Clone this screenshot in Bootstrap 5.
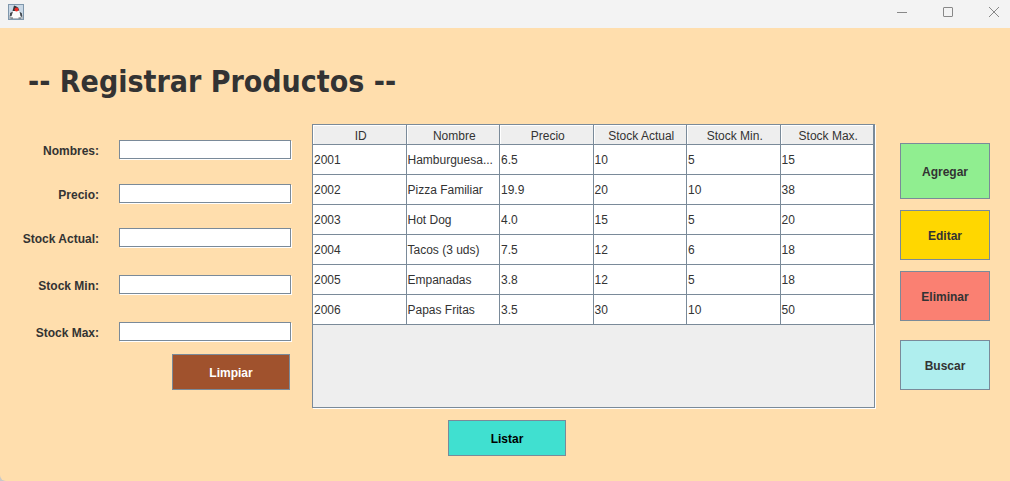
<!DOCTYPE html>
<html lang="es">
<head>
<meta charset="utf-8">
<meta name="viewport" content="width=device-width, initial-scale=1">
<title>Registrar Productos</title>
<link href="https://cdn.jsdelivr.net/npm/bootstrap@5.3.0/dist/css/bootstrap.min.css" rel="stylesheet">
<style>
  :root { --line: #7a8a99; --ink: #333; }
  body { background: #c9c9c9; color: var(--ink); font: 12px/16px "Liberation Sans", Arial, sans-serif; }
  .app-window { background: #ffdead; border-bottom-left-radius: 6px; overflow: hidden; }
  .title-strip { background: #f3f3f3; height: 28px; padding: 0 8px; }
  .win-btns { gap: 30px; }
  .win-btn { border: 0; background: none; padding: 0; width: 16px; height: 24px; color: #888; display: flex; align-items: center; justify-content: center; }
  .heading { font: bold 30px/40px "DejaVu Sans Condensed", "DejaVu Sans", sans-serif; padding: 34px 28px 0; }
  .work-area { padding: 22px 20px 24px 19px; }
  .product-form { width: 272px; margin-top: 16px; }
  .field { display: flex; align-items: center; justify-content: space-between; gap: 20px; margin-bottom: 25px; }
  .field.roomy { margin-bottom: 28px; }
  .field label { flex: 1; text-align: right; font-weight: bold; padding-top: 3px; }
  .field .form-control { width: 172px; height: 19px; min-height: 0; padding: 0 2px; font-size: 12px; border: 1px solid var(--line); border-radius: 0; box-shadow: 1px 1px #fff; }
  .form-actions { margin-top: 13px; padding-right: 1px; }
  .swing { border: 1px solid var(--line); border-radius: 0; font-size: 12px; line-height: 16px; font-weight: bold; color: var(--ink); padding: 2px 0 0; height: 50px; }
  .swing.wide { width: 118px; height: 36px; }
  .swing.tall { height: 56px; }
  .c-limpiar { background: #a0522d; color: #fff; }
  .c-listar { background: #40e0d0; color: #000; }
  .c-agregar { background: #90ee90; }
  .c-editar { background: #ffd700; }
  .c-eliminar { background: #fa8072; }
  .c-buscar { background: #afeeee; }
  .product-list { margin: 0 25px 0 21px; }
  .grid-pane { background: #eee; border: 1px solid var(--line); box-shadow: 1px 1px #fff; min-height: 284px; }
  .grid-table { table-layout: fixed; width: 100%; border-collapse: separate; border-spacing: 0; }
  .grid-table th, .grid-table td { border: solid var(--line); border-width: 0 1px 1px 0; overflow: hidden; white-space: nowrap; text-overflow: ellipsis; }
  .grid-table th { height: 20px; padding: 3px 0 0 3px; font-weight: normal; text-align: center; background: #eee; box-shadow: inset 1px 1px #fff; }
  .grid-table td { height: 30px; padding: 0 1px; background: #fff; }
  .side-actions { width: 90px; margin-top: 19px; gap: 11px; }
  .listar-row { margin-top: 12px; padding-left: 136px; }
</style>
</head>
<body>
<div class="app-window min-vh-100">
  <header class="title-strip d-flex justify-content-between">
    <svg class="mt-1" width="16" height="16" viewBox="0 0 16 16" role="img" aria-label="Java">
      <rect x=".5" y=".5" width="15" height="15" fill="#c9d8e6" stroke="#7f97ac"/>
      <path d="M1 11h14v4H1z" fill="#b4bcc4"/>
      <path d="M5 5 4 9l-1 5h10l-1-5-1-4z" fill="#fbfbfb"/>
      <path d="M6 1.500 4.500 7H8l3.500-.5C10.500 4 9 2 6 1.500z" fill="#33373c"/>
      <path d="M5 7.500 2 9v3h1.500zM11.500 7.500 14 9.500V13l-1.500-1z" fill="#444a50"/>
      <path d="M2.500 14h2.500M10.500 14H13" fill="none" stroke="#555c63"/>
      <circle cx="8.500" cy="5.500" r="2" fill="#ea2a25"/>
    </svg>
    <div class="win-btns d-flex">
      <button class="win-btn" type="button" aria-label="Minimizar"><svg width="12" height="12" viewBox="0 0 12 12" stroke="currentColor"><path d="M1 6.500h10"/></svg></button>
      <button class="win-btn" type="button" aria-label="Maximizar"><svg width="12" height="12" viewBox="0 0 12 12" fill="none" stroke="currentColor"><rect x="1.500" y="1.500" width="9" height="9" rx=".5"/></svg></button>
      <button class="win-btn" type="button" aria-label="Cerrar"><svg width="12" height="12" viewBox="0 0 12 12" stroke="currentColor"><path d="m1 1 10 10M11 1 1 11"/></svg></button>
    </div>
  </header>
  <main>
    <h1 class="heading m-0">-- Registrar Productos --</h1>
    <div class="work-area d-flex align-items-start">
      <form class="product-form flex-shrink-0">
        <div class="field"><label for="nombres">Nombres:</label><input class="form-control" id="nombres" type="text"></div>
        <div class="field"><label for="precio">Precio:</label><input class="form-control" id="precio" type="text"></div>
        <div class="field roomy"><label for="actual">Stock Actual:</label><input class="form-control" id="actual" type="text"></div>
        <div class="field roomy"><label for="min">Stock Min:</label><input class="form-control" id="min" type="text"></div>
        <div class="field mb-0"><label for="max">Stock Max:</label><input class="form-control" id="max" type="text"></div>
        <div class="form-actions d-flex justify-content-end"><button type="reset" class="btn swing wide c-limpiar">Limpiar</button></div>
      </form>
      <section class="product-list flex-grow-1">
        <div class="grid-pane">
          <table class="grid-table">
            <thead><tr><th scope="col">ID</th><th scope="col">Nombre</th><th scope="col">Precio</th><th scope="col">Stock Actual</th><th scope="col">Stock Min.</th><th scope="col">Stock Max.</th></tr></thead>
            <tbody>
              <tr><td>2001</td><td>Hamburguesa...</td><td>6.5</td><td>10</td><td>5</td><td>15</td></tr>
              <tr><td>2002</td><td>Pizza Familiar</td><td>19.9</td><td>20</td><td>10</td><td>38</td></tr>
              <tr><td>2003</td><td>Hot Dog</td><td>4.0</td><td>15</td><td>5</td><td>20</td></tr>
              <tr><td>2004</td><td>Tacos (3 uds)</td><td>7.5</td><td>12</td><td>6</td><td>18</td></tr>
              <tr><td>2005</td><td>Empanadas</td><td>3.8</td><td>12</td><td>5</td><td>18</td></tr>
              <tr><td>2006</td><td>Papas Fritas</td><td>3.5</td><td>30</td><td>10</td><td>50</td></tr>
            </tbody>
          </table>
        </div>
        <div class="listar-row"><button type="button" class="btn swing wide c-listar">Listar</button></div>
      </section>
      <div class="side-actions d-flex flex-column flex-shrink-0">
        <button type="button" class="btn swing tall c-agregar">Agregar</button>
        <button type="button" class="btn swing c-editar">Editar</button>
        <button type="button" class="btn swing c-eliminar">Eliminar</button>
        <button type="button" class="btn swing c-buscar mt-2">Buscar</button>
      </div>
    </div>
  </main>
</div>
<script src="https://cdn.jsdelivr.net/npm/bootstrap@5.3.0/dist/js/bootstrap.bundle.min.js"></script>
</body>
</html>
